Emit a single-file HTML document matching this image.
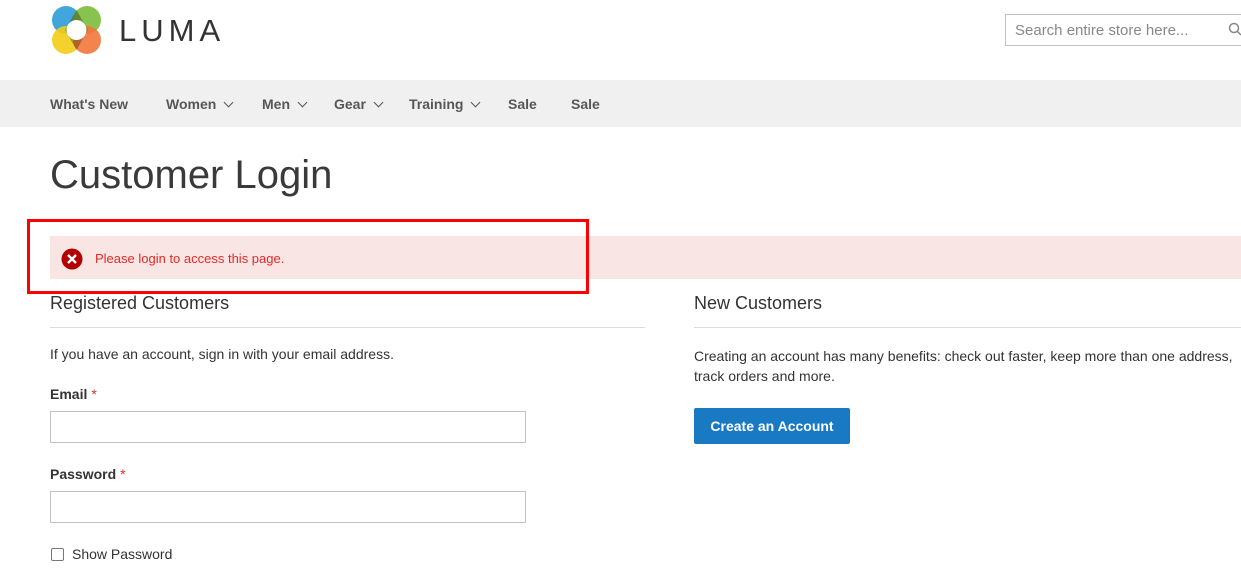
<!DOCTYPE html>
<html><head><meta charset="utf-8"><style>
*{margin:0;padding:0;box-sizing:border-box}
body{width:1241px;height:570px;overflow:hidden;background:#fff;font-family:"Liberation Sans",sans-serif;color:#333;position:relative}
.a{position:absolute}
.nav{left:0;top:80px;width:1241px;height:47px;background:#f0f0f0}
.nav span{position:absolute;top:16px;font-size:14px;font-weight:bold;color:#575757}
.chev{display:inline-block;width:7px;height:7px;border-right:1.5px solid #555;border-bottom:1.5px solid #555;transform:rotate(45deg);margin-left:9px;position:relative;top:-3px}
h1{position:absolute;left:50px;top:153px;font-weight:300;font-size:40px;color:#3a3a3a;font-family:"Liberation Sans",sans-serif}
.msg{left:50px;top:236px;width:1191px;height:43px;background:#fae5e5}
.box{left:27px;top:219px;width:562px;height:75px;border:3px solid #f00}
h2{position:absolute;font-weight:normal;font-size:18px;color:#333}
.line{height:1px;background:#ddd}
.t{position:absolute;font-size:14px;color:#333}
label{position:absolute;font-size:14px;font-weight:bold;color:#333}
label b{color:#e02b27;font-weight:normal;margin-left:4px}
.in{position:absolute;width:476px;height:32px;border:1px solid #c2c2c2;background:#fff}
</style></head><body>
<svg class="a" style="left:50px;top:4px" width="54" height="52" viewBox="0 0 54 52">
<g style="mix-blend-mode:multiply">
<circle cx="16" cy="16" r="14" fill="#2d9bd8" opacity=".9"/>
<circle cx="37" cy="16" r="14" fill="#7cbd3c" opacity=".9"/>
<circle cx="16" cy="36" r="14" fill="#f3cd17" opacity=".9"/>
<circle cx="37" cy="36" r="14" fill="#f2773a" opacity=".9"/>
</g>
<path d="M26.5 6 L38 26 L26.5 46 L15 26Z" fill="#4a3a10" opacity=".4"/>
<circle cx="26.5" cy="26" r="10" fill="#fff"/>
</svg>
<div class="a" style="left:119px;top:13px;font-size:31px;letter-spacing:5px;color:#333">LUMA</div>
<div class="a" style="left:1005px;top:14px;width:240px;height:32px;border:1px solid #c2c2c2;font-size:15px;color:#888;padding:7px 9px">Search entire store here...</div>
<svg class="a" style="left:1228px;top:22px" width="14" height="14"><circle cx="6" cy="6" r="4.5" fill="none" stroke="#888" stroke-width="1.5"/><path d="M9.5 9.5 L13 13" stroke="#888" stroke-width="1.5"/></svg>
<div class="a nav">
<span style="left:50px">What's New</span>
<span style="left:166px">Women<i class="chev"></i></span>
<span style="left:262px">Men<i class="chev"></i></span>
<span style="left:334px">Gear<i class="chev"></i></span>
<span style="left:409px">Training<i class="chev"></i></span>
<span style="left:508px">Sale</span>
<span style="left:571px">Sale</span>
</div>
<h1>Customer Login</h1>
<div class="a msg"></div>
<svg class="a" style="left:61px;top:248px" width="22" height="22"><circle cx="11" cy="11" r="10.5" fill="#b30000"/><path d="M7 7L15 15M15 7L7 15" stroke="#fff" stroke-width="2.4"/></svg>
<div class="t" style="left:95px;top:251px;font-size:13px;color:#e02b27">Please login to access this page.</div>
<div class="a box"></div>
<h2 style="left:50px;top:293px">Registered Customers</h2>
<div class="a line" style="left:50px;top:327px;width:595px"></div>
<div class="t" style="left:50px;top:346px">If you have an account, sign in with your email address.</div>
<label style="left:50px;top:386px">Email<b>*</b></label>
<div class="in" style="left:50px;top:411px"></div>
<label style="left:50px;top:466px">Password<b>*</b></label>
<div class="in" style="left:50px;top:491px"></div>
<div class="a" style="left:51px;top:548px;width:13px;height:13px;border:1px solid #777;border-radius:2px"></div>
<div class="t" style="left:72px;top:546px">Show Password</div>
<h2 style="left:694px;top:293px">New Customers</h2>
<div class="a line" style="left:694px;top:327px;width:547px"></div>
<div class="t" style="left:694px;top:346px;white-space:nowrap;line-height:20px">Creating an account has many benefits: check out faster, keep more than one address,<br>track orders and more.</div>
<div class="a" style="left:694px;top:408px;width:156px;height:36px;background:#1979c3;border:1px solid #1979c3;color:#fff;font-weight:bold;font-size:14px;text-align:center;line-height:34px;border-radius:2px">Create an Account</div>
</body></html>
